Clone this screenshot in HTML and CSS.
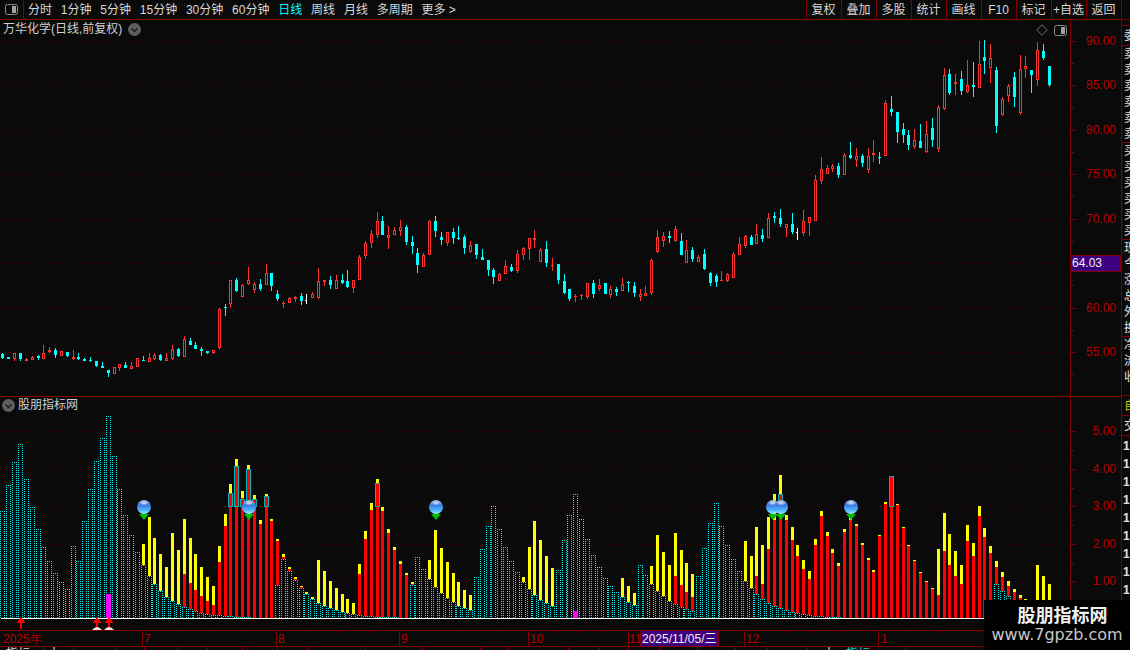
FILE: index.html
```html
<!DOCTYPE html>
<html lang="zh">
<head>
<meta charset="utf-8">
<title>万华化学 日线</title>
<link rel="stylesheet" href="styles.css">
</head>
<body>
<div class="app">
  <header class="toolbar">
    <div class="panel-toggle">
      <svg class="toggle-icon" width="13" height="11" viewBox="0 0 13 11"><rect x="0.5" y="0.5" width="12" height="10" rx="2" class="toggle-frame"/><rect x="7" y="2" width="4" height="7" class="toggle-fill"/></svg>
    </div>
    <nav class="periods">
      <span>分时</span><span>1分钟</span><span>5分钟</span><span>15分钟</span><span>30分钟</span><span>60分钟</span><span class="active">日线</span><span>周线</span><span>月线</span><span>多周期</span><span>更多 &gt;</span>
    </nav>
    <nav class="actions">
      <span>复权</span><span>叠加</span><span>多股</span><span>统计</span><span>画线</span><span>F10</span><span>标记</span><span>+自选</span><span>返回</span>
    </nav>
  </header>
  <main class="workspace">
    <div class="charts">
      <section class="price-panel">
        <svg id="price" class="chart" width="1121" height="377" viewBox="0 20 1121 377"></svg>
        <div class="title price-title">万华化学(日线,前复权)<svg class="chev" width="13" height="13" viewBox="0 0 13 13"><circle cx="6.5" cy="6.5" r="6.5" class="chev-bg"/><path d="M3.5 5.5 L6.5 8.5 L9.5 5.5" class="chev-line"/></svg></div>
        <div class="panel-tools">
          <svg width="12" height="12" viewBox="0 0 12 12"><path d="M6 .8 L11.2 6 L6 11.2 L.8 6 Z" class="tool-line"/></svg>
          <svg width="13" height="11" viewBox="0 0 13 11"><rect x="0.5" y="0.5" width="12" height="10" rx="2" class="toggle-frame"/><rect x="7" y="2" width="4" height="7" class="toggle-fill"/></svg>
        </div>
      </section>
      <section class="indicator-panel">
        <svg id="indicator" class="chart" width="1121" height="253" viewBox="0 397 1121 253"></svg>
        <div class="title ind-title"><svg class="chev" width="13" height="13" viewBox="0 0 13 13"><circle cx="6.5" cy="6.5" r="6.5" class="chev-bg"/><path d="M3.5 5.5 L6.5 8.5 L9.5 5.5" class="chev-line"/></svg>股朋指标网</div>
      </section>
    </div>
    <aside class="side">
      <div class="side-gap"></div>
      <div class="side-group head"><div>委</div></div>
      <div class="side-group"><div>卖</div><div>卖</div><div>卖</div><div>卖</div><div>卖</div><div>卖</div></div>
      <div class="side-group"><div>买</div><div>买</div><div>买</div><div>买</div><div>买</div><div>买</div></div>
      <div class="side-group"><div>现</div><div>今</div><div>涨</div><div>总</div><div>外</div><div>换</div></div>
      <div class="side-group last"><div>净</div><div>流</div><div>收</div></div>
      <div class="side-group tall"><div class="gold">自</div></div>
      <div class="side-group tall"><div>交</div></div>
      <div class="side-group nums"><div>1</div><div>1</div><div>1</div><div>1</div><div>1</div><div>1</div><div>1</div><div>1</div><div>1</div></div>
    </aside>
  </main>
  <div class="watermark">
    <div class="wm-name">股朋指标网</div>
    <div class="wm-url">www.7gpzb.com</div>
  </div>
</div>
<script src="chart.js"></script>
</body>
</html>
```

FILE: styles.css
```css
* { box-sizing: border-box; }
html, body { margin: 0; padding: 0; background: #0a0a0a; }
body { width: 1130px; height: 650px; overflow: hidden; font: 12px/14px "Liberation Sans", "Noto Sans CJK SC", sans-serif; color: #d8d8d8; }
.app { position: relative; width: 1130px; height: 650px; display: flex; flex-direction: column; overflow: hidden; }

.toolbar { flex: none; height: 20px; display: flex; align-items: stretch; border-bottom: 1px solid #800000; background: #0a0a0a; }
.panel-toggle { width: 24px; border-right: 1px solid #800000; display: flex; align-items: center; justify-content: center; }
.toggle-frame { fill: none; stroke: #8c8c8c; stroke-width: 1; }
.toggle-fill { fill: #a0a0a0; }
.periods { display: flex; gap: 8.8px; align-items: center; padding-left: 4px; white-space: nowrap; }
.periods .active { color: #00ffff; }
.actions { margin-left: auto; margin-right: 8px; display: flex; border-right: 1px solid #800000; }
.actions span { width: 35px; border-left: 1px solid #800000; display: flex; align-items: center; justify-content: center; white-space: nowrap; padding-right: 1px; }

.workspace { flex: 1; display: flex; min-height: 0; }
.charts { width: 1121px; flex: none; }
.chart { display: block; }
.price-panel, .indicator-panel { position: relative; }
.title { position: absolute; display: flex; align-items: center; color: #d0d0d0; white-space: nowrap; }
.price-title { left: 3px; top: 2px; gap: 6px; }
.ind-title { left: 2px; top: 1px; gap: 3px; }
.chev { flex: none; }
.chev-bg { fill: #5e5e5e; }
.chev-line { fill: none; stroke: #1c1c1c; stroke-width: 1.4; }
.panel-tools { position: absolute; left: 1036px; top: 4px; display: flex; gap: 6px; align-items: center; }
.tool-line { fill: none; stroke: #707070; stroke-width: 1; }

.side { width: 9px; flex: none; border-left: 1px solid #800000; overflow: hidden; display: flex; flex-direction: column; font-size: 12px; line-height: 16px; }
.side-gap { height: 5px; flex: none; }
.side-group { border-top: 1px solid #800000; flex: none; overflow: hidden; height: 97px; }
.side-group div { height: 16px; padding-left: 2px; width: 24px; color: #e0e0e0; }
.side-group.head { height: 20px; padding-top: 2px; }
.side-group.last { height: 59px; }
.side-group.tall { height: 20px; padding-top: 2px; }
.side-group .gold { color: #c8c800; }
.side-group.nums { height: auto; padding-top: 1px; }
.side-group.nums div { height: 18px; padding-left: 1px; line-height: 18px; font-weight: bold; }

.watermark { position: absolute; left: 984px; top: 600px; width: 146px; height: 50px; background: #000; display: flex; flex-direction: column; align-items: center; }
.wm-name { font: bold 18px/20px "Noto Sans CJK SC", sans-serif; color: #f0f0f0; margin-top: 4px; margin-left: 11px; }
.wm-url { font: 16px/18px "DejaVu Sans", sans-serif; color: #c8c8c8; margin-top: 2px; }

/* SVG chart parts */
.grid { stroke: #5e0000; stroke-width: 1; stroke-dasharray: 1 4; }
.axis { fill: #800000; }
.tick { fill: #800000; }
.label { fill: #b80000; font: 12px "Liberation Sans", sans-serif; }
.label-end { text-anchor: end; }
.up { fill: #ff3232; }
.hollow { fill: #0a0a0a; }
.down { fill: #00ffff; }
.flat { fill: #ffffff; }
.bar-y { fill: #ffff00; }
.bar-r { fill: #ff0000; }
.bar-m { fill: #ff00ff; }
.bar-bg { fill: #0a0a0a; }
.dots { stroke: #00f0f0; stroke-width: 1; stroke-dasharray: 1 1; fill: none; }
.outline { fill: none; stroke: #00b4b4; stroke-width: 1; }
.baseline { fill: #ffffff; }
.tag { fill: #3f0080; stroke: #800000; stroke-width: 1; }
.tag-text { fill: #f0f0f0; font: 12px "Liberation Sans", sans-serif; }
.date-text { fill: #f0f0f0; font: 12px "Liberation Sans", "Noto Sans CJK SC", sans-serif; }
.arrow { fill: #ff0000; }
.foot { fill: #ffe0e0; }
.tri { fill: #00c000; }
.strip-w { fill: #e0e0e0; font: 12px "Noto Sans CJK SC", sans-serif; }
.strip-c { fill: #00e0e0; font: 12px "Noto Sans CJK SC", sans-serif; }
```

FILE: chart.js
```js
(function () {
  var NS = 'http://www.w3.org/2000/svg';
  function el(parent, name, attrs, text) {
    var n = document.createElementNS(NS, name);
    for (var k in attrs) n.setAttribute(k, attrs[k]);
    if (text != null) n.textContent = text;
    parent.appendChild(n);
    return n;
  }
  function rect(p, cls, x, y, w, h) {
    if (h <= 0) return;
    el(p, 'rect', { 'class': cls, x: x, y: y, width: w, height: h, 'shape-rendering': 'crispEdges' });
  }
  function centre(i) { return Math.floor(2.99 + 5.845 * i); }
  function hline(p, cls, x1, x2, y) {
    el(p, 'line', { 'class': cls, x1: x1, x2: x2, y1: y + 0.5, y2: y + 0.5, 'shape-rendering': 'crispEdges' });
  }
  function vline(p, cls, x, y1, y2) {
    el(p, 'line', { 'class': cls, x1: x + 0.5, x2: x + 0.5, y1: y1, y2: y2, 'shape-rendering': 'crispEdges' });
  }

  /* Candles: [kind, bodyTop, bodyBottom, wickTop, wickBottom] read at 3x scale; kind r=up c=down w=flat */
  var seg1 = [
    ['c',431,444,428,447],['c',441,446,441,446],['r',430,446,430,453],['c',429,446,429,453],['r',447,452,445,453],
    ['r',441,449,438,450],['c',437,444,434,450],['r',430,446,405,447],['r',420,426,411,429],['c',420,435,415,444],
    ['r',424,437,424,437],['c',427,437,427,441],['r',442,447,420,450],['c',441,447,429,450],['c',447,453,444,453],
    ['c',450,453,441,456],['c',453,468,453,471],['c',468,474,456,474],['c',480,489,480,501],['r',472,491,472,491],
    ['r',463,473,463,483],['c',465,474,456,474],['r',468,476,456,477],['r',445,470,445,470],['c',450,453,438,453],
    ['r',445,456,429,456],['r',436,446,429,450],['c',435,450,432,453],['r',445,452,429,453],['r',417,447,405,450],
    ['c',417,438,414,441],['r',388,440,378,441],['c',393,405,384,405],['c',405,417,396,417],['c',417,423,411,438],
    ['c',423,429,423,432],['r',420,429,420,432],['r',297,414,294,417],['c',291,293,282,318],['r',211,281,211,294],
    ['c',210,243,205,246],['r',226,260,223,261],['r',211,223,171,225],['r',223,240,216,249],['c',222,237,207,243],
    ['r',190,224,162,225],['c',189,228,189,243],['c',252,267,240,273],['r',279,281,273,294],['r',264,278,261,279],
    ['r',262,266,259,276],['c',258,273,249,285],['w',270,272,252,282],['r',253,263,246,264],['r',214,264,174,267],
    ['r',211,215,210,228],['c',210,225,198,237],['r',211,237,195,237],['c',210,220,192,222],['c',213,231,180,234],
    ['r',211,233,210,249],['r',142,209,136,209],['r',100,137,94,147],['r',73,98,60,114]
  ];
  var seg2 = [
    ['r',64,104,37,113],['c',64,104,48,104],['r',106,113,78,146],['r',91,104,82,104],['r',82,92,60,107],
    ['c',82,125,75,134],['c',126,137,108,161],['c',159,194,144,218],['r',166,200,160,200],['r',64,166,61,166],
    ['c',64,92,48,110],['c',112,119,96,134],['r',97,128,97,137],['c',97,113,85,131],['c',115,118,78,119],
    ['c',112,143,105,161],['r',136,155,124,158],['c',133,164,133,176],['c',172,179,148,179],['c',180,209,180,227],
    ['c',210,230,205,251],['r',223,242,220,242],['r',198,223,180,223],['c',202,212,193,215],['r',163,212,151,220],
    ['r',145,166,142,179],['r',115,146,115,179],['r',115,121,91,143],['r',151,185,145,185],['c',148,190,124,200],
    ['r',195,197,175,212],['c',192,239,192,251],['c',243,279,222,282],['c',267,296,267,302],['r',288,292,282,305],
    ['r',286,289,282,300],['r',250,290,250,296],['c',250,281,240,293],['r',256,268,237,272],['c',250,281,250,281],
    ['r',268,284,259,293],['c',268,275,262,287],['r',253,272,235,272],['c',247,250,243,275],['c',259,278,246,290],
    ['r',283,292,267,302],['r',278,287,259,287],['r',181,278,178,284],['r',112,157,91,158],['r',109,124,97,140],
    ['c',108,114,94,128],['r',88,124,79,125],['c',124,164,99,164],['r',151,188,121,188],['c',151,176,142,185],
    ['r',172,185,166,185]
  ];
  var seg3 = [
    ['c',672,717,657,720],['c',729,758,726,767],['c',738,755,732,770],['r',750,752,723,752],['r',733,752,730,755],
    ['r',673,743,666,743],['r',643,674,621,674],['r',619,648,616,654],['c',622,644,616,644],['r',613,641,582,641],
    ['c',616,627,598,636],['r',565,623,549,623],['c',558,564,546,579],['c',565,582,537,591],['r',583,594,583,621],
    ['c',583,606,549,612],['w',606,608,594,630],['r',574,608,540,618],['r',562,578,562,618],['r',451,572,435,572],
    ['r',418,453,381,462],['r',415,431,406,431],['r',408,417,402,426],['c',408,435,399,444],['r',376,434,370,434],
    ['c',376,385,336,388],['r',379,389,354,411],['c',378,399,372,411],['r',379,419,354,429],['r',370,374,330,396],
    ['c',381,383,366,402],['r',220,377,211,377],['c',237,246,198,258],['c',246,306,246,339],['c',297,315,279,339],
    ['c',315,345,300,360],['r',331,350,297,357],['c',333,354,282,354],['r',313,366,273,369],['c',294,330,264,351],
    ['r',232,357,226,366],['r',136,237,114,240],['c',132,189,117,195],['r',156,161,132,195],['c',147,183,123,195],
    ['r',166,185,90,188],['c',165,171,96,201],['r',103,173,33,173],['c',81,93,30,132],['r',85,113,42,159],
    ['c',120,288,111,309],['r',208,255,202,258],['r',169,197,163,216],['c',141,201,126,231],['r',118,248,75,255],
    ['r',109,116,78,144],['c',120,135,120,189],['r',61,149,36,168],['c',63,84,42,90],['c',108,165,108,171]
  ];

  function drawCandle(p, i, d, base) {
    var cx = centre(i);
    var bt = Math.round(base + d[1] / 3), bb = Math.round(base + d[2] / 3);
    var wt = Math.round(base + d[3] / 3), wb = Math.round(base + d[4] / 3);
    var fill = d[0] === 'r' ? 'up' : d[0] === 'c' ? 'down' : 'flat';
    rect(p, fill, cx, wt, 1, bt - wt);
    rect(p, fill, cx, bb, 1, wb - bb);
    if (d[0] === 'w') {
      rect(p, fill, cx - 1, bt, 2, 1);
      rect(p, fill, cx, wt, 1, wb - wt);
      return;
    }
    rect(p, fill, cx - 1, bt, 3, Math.max(1, bb - bt));
    if (d[0] === 'r' && bb - bt > 2) rect(p, 'hollow', cx, bt + 1, 1, bb - bt - 2);
  }

  function drawPrice(svg) {
    var step = 44.43, y90 = 41;
    var labels = ['90.00', '85.00', '80.00', '75.00', '70.00', '', '60.00', '55.00'];
    labels.forEach(function (t, k) {
      var y = Math.round(y90 + step * k);
      hline(svg, 'grid', 0, 1069, y);
      rect(svg, 'tick', 1071, y, 5, 1);
      rect(svg, 'tick', 1071, Math.round(y + step / 2), 3, 1);
      if (t) el(svg, 'text', { 'class': 'label label-end', x: 1116, y: y + 4 }, t);
    });
    seg1.forEach(function (d, i) { if (i < 64) drawCandle(svg, i, d, 210); });
    seg2.forEach(function (d, i) { drawCandle(svg, i + 64, d, 200); });
    seg3.forEach(function (d, i) { drawCandle(svg, i + 120, d, 30); });
    rect(svg, 'axis', 1070, 20, 1, 377);
    rect(svg, 'axis', 0, 396, 1121, 1);
    el(svg, 'rect', { 'class': 'tag', x: 1070.5, y: 255.5, width: 50, height: 16, 'shape-rendering': 'crispEdges' });
    el(svg, 'text', { 'class': 'tag-text', x: 1072, y: 267 }, '64.03');
  }

  /* Indicator: [dottedTop, yellowTop, redTop, outlineTop] read at 3x scale, 0 = absent */
  var b1 = [
    [363],[285],[216],[162],[267],[351],[417],[471],[513],[549],[576],[597],[468],[513],[393],[297],[213],[144],[78],[198],
    [297],[375],[435],[486],[525,462],[558,381],[582,444],[603,492],[621,531],[633,429],[642,480],[651,387,552],[657,444,579],
    [663,492,600],[669,531,618],[672,561,633],[675,588,645],[676,468,516],[678,372,408],[678,282,312,309],[680,207,231,228],
    [681,303,323,326],[681,225,240,237],[683,315,330,327],[0,390,402],[0,312,321,318],[0,387,393],[585,447,453]
  ];
  var b2 = [
    [267,252,261],[303,291,297],[330,321,327],[354,348,351],[372,366],[387,381],[399,270],[408,303],[414,333],[420,354],
    [426,372],[429,387],[432,399],[435,282,312],[438,183,207],[438,99,120],[441,27,42,39],[441,111,123],[441,177,189],[441,231,240],
    [0,273,282],[0,309,315],[345,336,342],[261],[297],[327,270],[351,180],[369,234],[384,276],[396,309],
    [408,336],[414,360],[420,375],[321],[237],[168],[108],[177],[231],[273],
    [306],[336,321],[357,231],[375,153],[390,210],[399,258],[408,294],[300],
    [210],[135],[72],[147],[207],[255],[291],[324],[348],[366],
    [381,324],[396,348],[405,369],[285],[315],[342,288],[363,195],[378,246],[393,285],[402,189,318],
    [411,240,345],[417,279,366],[423,312,381],[318],[234],[159],[99],[168],[225],[267],
    [303],[333,213],[354,258],[372,171,318],[387,225,342],[399,141,237],[408,72,150],[414,15,75,72],[420,135,150],[426,171,210],
    [429,225,258],[432,270,297],[435,303,327],[438,207,225],[438,123,138],[441,186,198],[441,237,249],[441,279,288]
  ];
  var b3 = [
    [0,418,426],[0,378,390],[0,402,408],[0,459,465],[0,504,510],[0,540,546],[0,435,438],[0,336,342],[0,258,261,258],[0,342,346],
    [0,411,415],[0,465,468],[0,510,514],[0,546,549],[0,573,576],[0,594,597],[0,477,615],[0,369,483],[0,432,525],[0,483,558],
    [0,525,582],[0,405,453],[0,459,498],[0,348,378],[0,414,441],[0,468,489],[582,513,531],[603,546,561],[618,573,588],[0,597,606],
    [0,615,624],[0,627],[0],[0,525],[0,558],[0,582]
  ];

  var BASE = 618, LEVEL3 = 506;
  function drawBar(svg, i, d, base) {
    var cx = centre(i);
    var y = function (z) { return Math.round(base + z / 3); };
    if (d[1]) rect(svg, 'bar-y', cx - 1, y(d[1]), 3, BASE - y(d[1]));
    if (d[2]) rect(svg, 'bar-r', cx - 1, y(d[2]), 3, BASE - y(d[2]));
    if (d[3]) el(svg, 'rect', { 'class': 'outline', x: cx - 1.5, y: y(d[3]) + 0.5, width: 4, height: LEVEL3 - y(d[3]), 'shape-rendering': 'crispEdges' });
    if (d[0]) {
      var t = y(d[0]);
      rect(svg, 'bar-bg', cx - 2, t, 5, BASE - t);
      vline(svg, 'dots', cx - 2, t, BASE);
      vline(svg, 'dots', cx + 2, t, BASE);
      hline(svg, 'dots', cx - 2, cx + 3, t);
    }
  }

  function ball(svg, x) {
    el(svg, 'polygon', { 'class': 'tri', points: (x - 5) + ',514 ' + (x + 5) + ',514 ' + x + ',520' });
    el(svg, 'circle', { cx: x, cy: 507, r: 7, fill: 'url(#ballFill)' });
    el(svg, 'ellipse', { cx: x, cy: 503, rx: 4.5, ry: 2.5, fill: 'url(#ballShine)' });
  }

  function arrow(svg, x, foot) {
    el(svg, 'polygon', { 'class': 'arrow', points: x + ',617 ' + (x + 4.5) + ',623 ' + (x + 1) + ',623 ' + (x + 1) + ',629 ' + (x - 1) + ',629 ' + (x - 1) + ',623 ' + (x - 4.5) + ',623' });
    if (foot) el(svg, 'path', { 'class': 'foot', d: 'M' + (x - 5) + ' 630 Q' + x + ' 624 ' + (x + 5) + ' 630 Z' });
  }

  function drawIndicator(svg) {
    var defs = el(svg, 'defs', {});
    var g = el(defs, 'linearGradient', { id: 'ballFill', x1: 0, y1: 0, x2: 0, y2: 1 });
    el(g, 'stop', { offset: '0', 'stop-color': '#a8b8d8' });
    el(g, 'stop', { offset: '0.35', 'stop-color': '#3a78e0' });
    el(g, 'stop', { offset: '0.75', 'stop-color': '#50b8ff' });
    el(g, 'stop', { offset: '1', 'stop-color': '#a0f0ff' });
    var s = el(defs, 'radialGradient', { id: 'ballShine' });
    el(s, 'stop', { offset: '0', 'stop-color': '#ffffff', 'stop-opacity': '0.8' });
    el(s, 'stop', { offset: '1', 'stop-color': '#ffffff', 'stop-opacity': '0' });

    var ly = [431, 469, 506, 544, 581], lt = ['5.00', '4.00', '3.00', '2.00', '1.00'];
    ly.forEach(function (y, k) {
      hline(svg, 'grid', 0, 1069, y);
      rect(svg, 'tick', 1071, y, 5, 1);
      rect(svg, 'tick', 1071, y + 19, 3, 1);
      el(svg, 'text', { 'class': 'label label-end', x: 1116, y: y + 4 }, lt[k]);
    });

    b1.forEach(function (d, i) { drawBar(svg, i, d, 390); });
    b2.forEach(function (d, i) { drawBar(svg, i + 48, d, 470); });
    b3.forEach(function (d, i) { drawBar(svg, i + 144, d, 390); });

    rect(svg, 'bar-m', centre(18) - 2, 594, 5, 24);
    rect(svg, 'bar-m', centre(98) - 2, 611, 5, 7);
    rect(svg, 'baseline', 1, 618, 1069, 1);
    [144, 249, 436, 773, 781, 851].forEach(function (x) { ball(svg, x); });
    arrow(svg, 21, false); arrow(svg, 97, true); arrow(svg, 109, true);

    /* date axis */
    rect(svg, 'axis', 1070, 397, 1, 233);
    rect(svg, 'axis', 0, 630, 1121, 1);
    rect(svg, 'axis', 0, 646, 1121, 1);
    [142, 276, 399, 528, 628, 744, 878].forEach(function (x) { rect(svg, 'axis', x, 631, 1, 15); });
    [177, 209, 243, 307, 338, 368, 463, 497, 558, 578, 602, 784, 812, 842, 907, 942, 980, 1015].forEach(function (x) { rect(svg, 'tick', x, 631, 1, 2); });
    [['2025年', 3], ['7', 144], ['8', 278], ['9', 401], ['10', 530], ['11', 629], ['12', 746], ['1', 881]].forEach(function (m) {
      el(svg, 'text', { 'class': 'label', x: m[1], y: 643 }, m[0]);
    });
    el(svg, 'rect', { 'class': 'tag', x: 640.5, y: 630.5, width: 78, height: 16, 'shape-rendering': 'crispEdges' });
    el(svg, 'text', { 'class': 'date-text', x: 642, y: 643 }, '2025/11/05/三');

    /* cut-off tab strip along the bottom edge */
    [43, 73, 115, 144, 177, 207, 242, 277, 308, 365, 422, 480, 508, 568, 599, 628, 660, 697, 735, 767, 807, 870, 905].forEach(function (x) { rect(svg, 'axis', x, 647, 1, 3); });
    el(svg, 'text', { 'class': 'strip-w', x: 6, y: 658 }, '指标');
    el(svg, 'text', { 'class': 'strip-w', x: 48, y: 658 }, '十');
    el(svg, 'text', { 'class': 'strip-w', x: 823, y: 658 }, '十');
    el(svg, 'text', { 'class': 'strip-c', x: 846, y: 658 }, '指标');
  }

  drawPrice(document.getElementById('price'));
  drawIndicator(document.getElementById('indicator'));
})();
```
